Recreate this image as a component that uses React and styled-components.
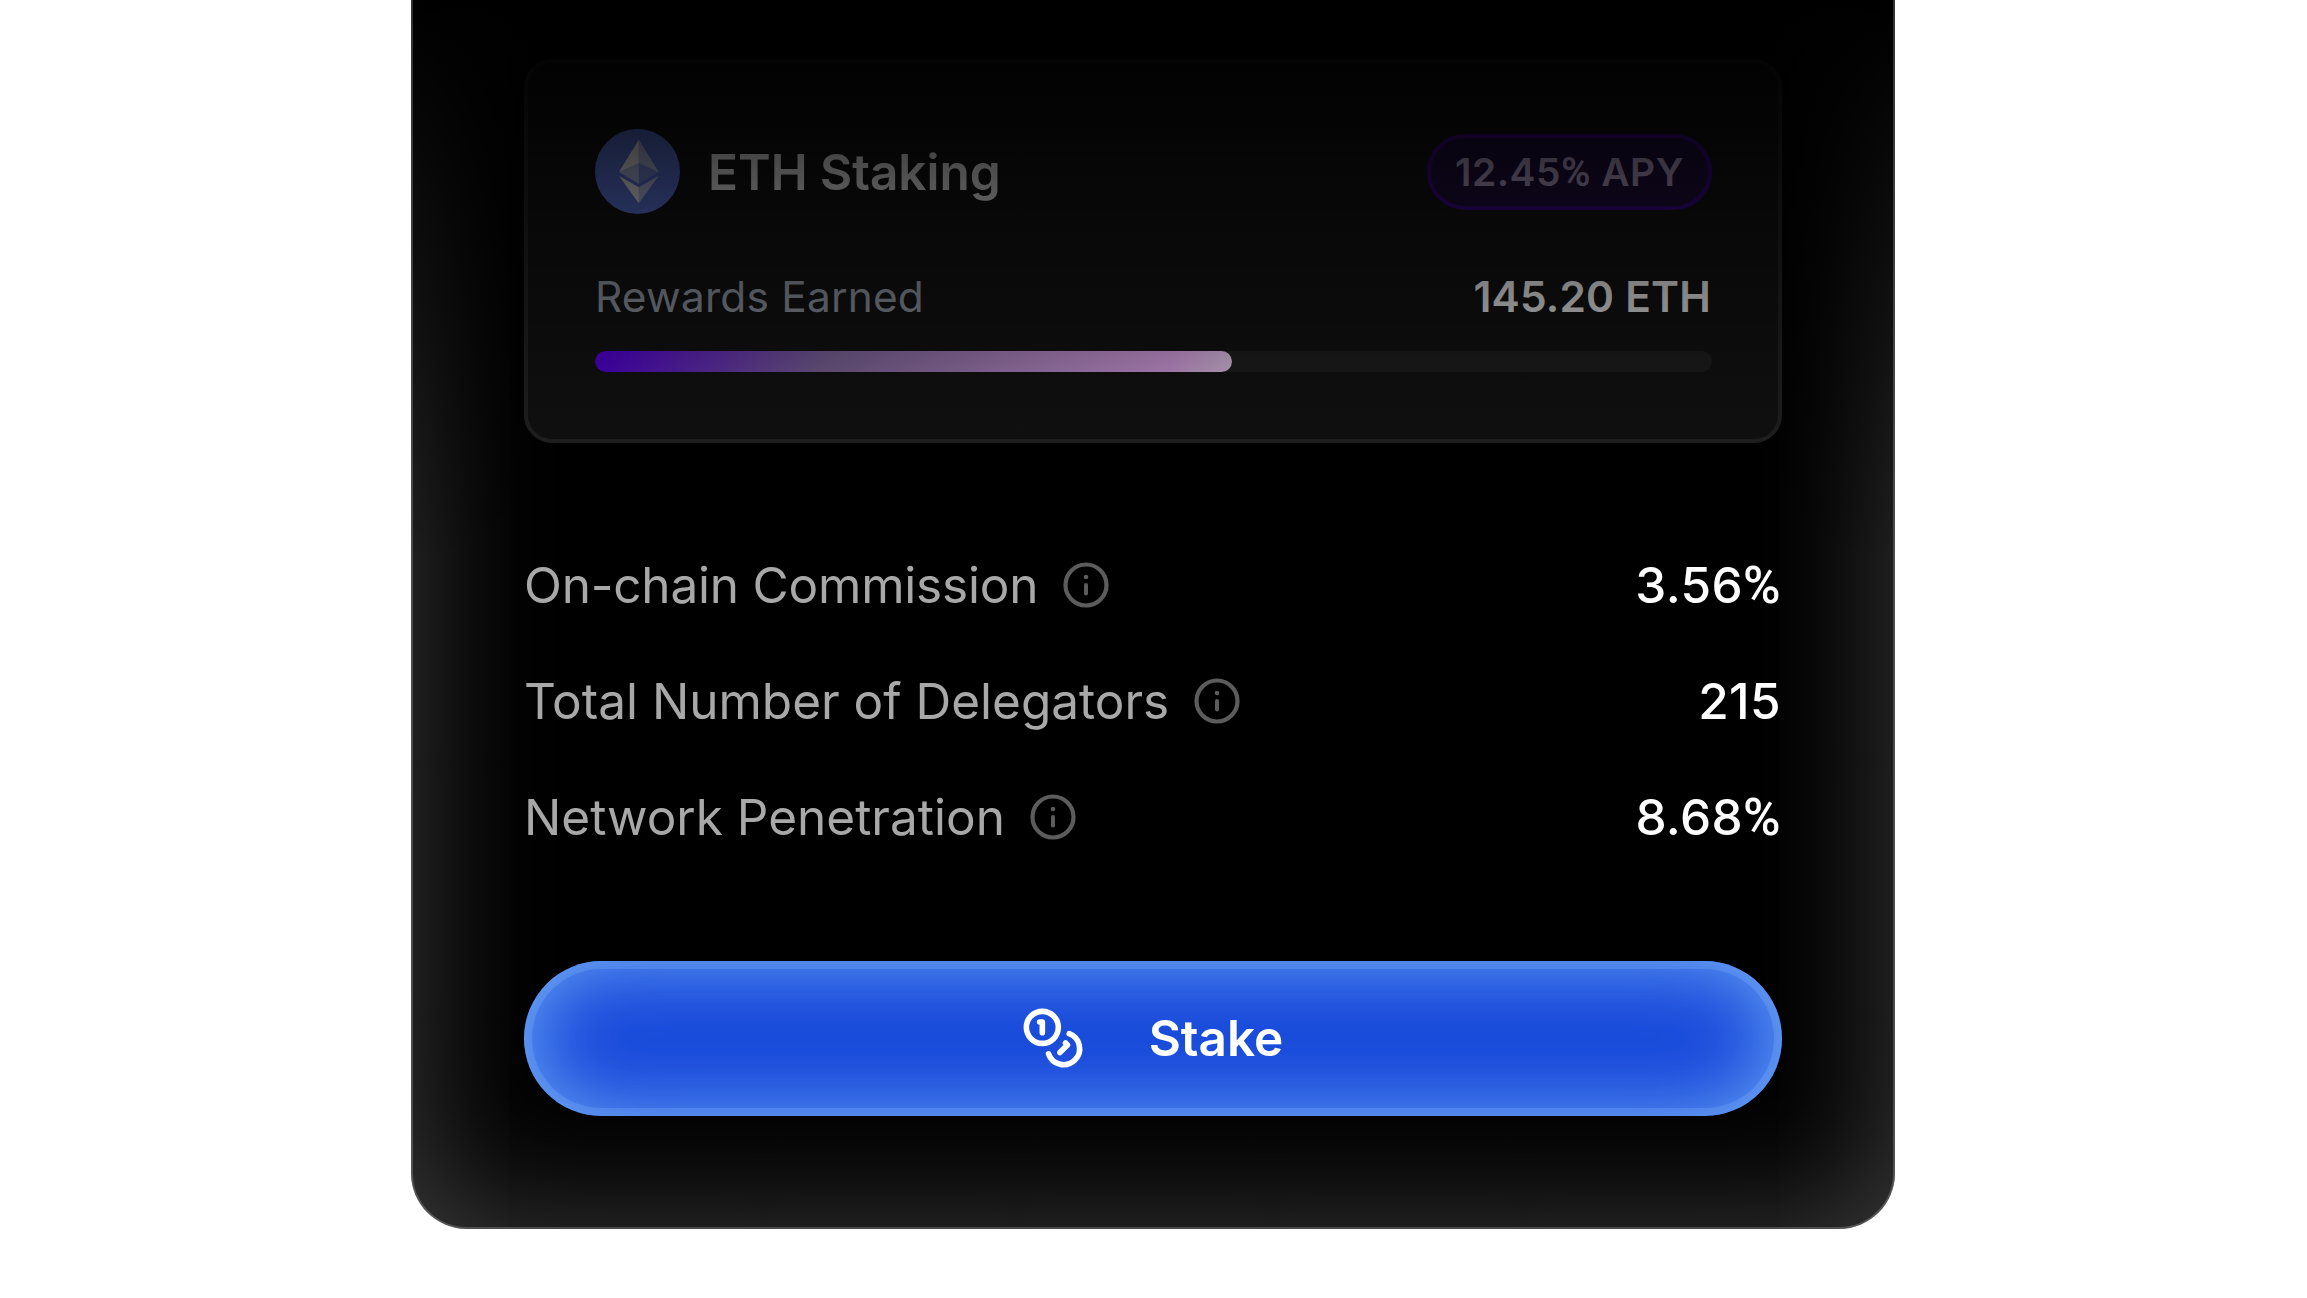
import React from 'react';
import styled, { createGlobalStyle } from 'styled-components';

const stats = [
  { label: 'On-chain Commission', value: '3.56', unit: '%', tracking: -0.2 },
  { label: 'Total Number of Delegators', value: '215' },
  { label: 'Network Penetration', value: '8.68', unit: '%' },
];

const EthIcon = () => (
  <svg width="85" height="85" viewBox="0 0 32 32" fill="#fff">
    <circle cx="16" cy="16" r="16" fill="#627eea" />
    <path fillOpacity=".602" d="M16.498 4v8.87l7.497 3.35z" />
    <path d="M16.498 4L9 16.22l7.498-3.35z" />
    <path fillOpacity=".602" d="M16.498 21.968v6.027L24 17.616z" />
    <path d="M16.498 27.995v-6.028L9 17.616z" />
    <path fillOpacity=".2" d="M16.498 20.573l7.497-4.353-7.497-3.348z" />
    <path fillOpacity=".602" d="M9 16.22l7.498 4.353v-7.701z" />
  </svg>
);

const InfoIcon = () => (
  <svg width="46" height="46" viewBox="0 0 46 46" fill="none" stroke="#5c5c5c" strokeLinecap="round">
    <circle cx="23" cy="23" r="20.5" strokeWidth="4.2" />
    <path strokeWidth="4" d="M23 23v8.4" />
    <circle cx="23" cy="15" r="2.3" fill="#5c5c5c" stroke="none" />
  </svg>
);

const CoinsIcon = () => (
  <svg
    width="64"
    height="64"
    viewBox="0 0 24 24"
    fill="none"
    stroke="currentColor"
    strokeWidth="2.1"
    strokeLinecap="round"
    strokeLinejoin="round"
  >
    <circle cx="8" cy="8" r="6" />
    <path d="M18.09 10.37A6 6 0 1 1 10.34 18" />
    <path d="M7 6h1v4" />
    <path d="m16.71 13.88.7.71-2.82 2.82" />
  </svg>
);

const App = () => {
  return (
    <>
      <GlobalStyle />
      <Page>
        <Modal>
          <StakingCard>
            <CardHeader>
              <Asset>
                <EthIcon />
                <AssetName>ETH Staking</AssetName>
              </Asset>
              <ApyBadge>
                <span>12.45<Unit>%</Unit> APY</span>
              </ApyBadge>
            </CardHeader>
            <RewardRow>
              <RewardLabel>Rewards Earned</RewardLabel>
              <RewardValue>145.20 ETH</RewardValue>
            </RewardRow>
            <ProgressTrack>
              <ProgressFill $percent={57} />
            </ProgressTrack>
          </StakingCard>

          <StatList>
            {stats.map((stat) => (
              <StatRow key={stat.label}>
                <StatLabel $tracking={stat.tracking}>
                  {stat.label}
                  <InfoIcon />
                </StatLabel>
                <StatValue>
                  {stat.value}
                  {stat.unit && <Unit>{stat.unit}</Unit>}
                </StatValue>
              </StatRow>
            ))}
          </StatList>

          <StakeButton>
            <CoinsIcon />
            Stake
          </StakeButton>
        </Modal>
      </Page>
    </>
  );
};

const GlobalStyle = createGlobalStyle`
  * {
    box-sizing: border-box;
  }

  body {
    margin: 0;
    background: #fff;
    font-family: 'Inter', sans-serif;
    overflow: hidden;
  }
`;

const Page = styled.div`
  width: 100%;
  height: 100vh;
  display: flex;
  justify-content: center;
  align-items: flex-end;
  padding: 0 1px 69px 0;
  overflow: hidden;
`;

const Modal = styled.div`
  position: relative;
  flex-shrink: 0;
  width: 1484px;
  height: 1500px;
  padding: 0 113px 113px;
  display: flex;
  flex-direction: column;
  justify-content: flex-end;
  background: #000;
  border-radius: 56px;
  box-shadow: inset 0 0 141px rgba(255, 255, 255, 0.26);

  /* fades the upper part of the modal into black */
  &::before {
    content: '';
    position: absolute;
    inset: 0 0 auto;
    height: 835px;
    background: linear-gradient(to bottom, #000 271px, transparent 835px);
  }

  &::after {
    content: '';
    position: absolute;
    inset: 0;
    border: 2px solid rgba(255, 255, 255, 0.2);
    border-radius: 56px;
    pointer-events: none;
  }
`;

const StakingCard = styled.div`
  height: 384px;
  padding: 66px 66px 0 67px;
  background: #141414;
  border: 4px solid #262626;
  border-radius: 28px;
`;

const CardHeader = styled.div`
  display: flex;
  align-items: center;
  justify-content: space-between;
`;

const Asset = styled.div`
  display: flex;
  align-items: center;
  gap: 28px;
`;

const AssetName = styled.span`
  font-size: 49.5px;
  font-weight: 600;
  line-height: 70px;
  color: #fff;
`;

const Unit = styled.span`
  font-family: 'Roboto', sans-serif;
  font-size: 1.03em;
  line-height: 1;
`;

const ApyBadge = styled.span`
  display: flex;
  align-items: center;
  justify-content: center;
  width: 285px;
  height: 76px;
  padding-bottom: 1px;
  font-size: 38.9px;
  font-weight: 600;
  letter-spacing: 0.5px;
  color: #c3afdd;
  background: #200e40;
  border: 4px solid #3e0794;
  border-radius: 38px;
`;

const RewardRow = styled.div`
  display: flex;
  align-items: center;
  justify-content: space-between;
  margin-top: 55px;
  font-size: 42.4px;
  line-height: 56px;
  letter-spacing: 0.2px;
`;

const RewardLabel = styled.span`
  color: #9ca3af;
`;

const RewardValue = styled.span`
  padding-right: 1px;
  font-weight: 600;
  color: #fff;
`;

const ProgressTrack = styled.div`
  height: 21px;
  margin-top: 26px;
  background: #222;
  border-radius: 11px;
  overflow: hidden;
`;

const ProgressFill = styled.div`
  width: ${(props) => props.$percent}%;
  height: 100%;
  background: linear-gradient(120deg, #5a00ea 2%, #876ca6 36%, #ecaff8 90%, #f8dcff 100%);
  border-radius: 11px;
`;

const StatList = styled.div`
  display: flex;
  flex-direction: column;
  gap: 46px;
  margin: 107px 0 109px;
`;

const StatRow = styled.div`
  display: flex;
  align-items: center;
  justify-content: space-between;
  height: 70px;
  font-size: 49.5px;
`;

const StatLabel = styled.span`
  display: flex;
  align-items: center;
  gap: 25px;
  letter-spacing: ${(props) => props.$tracking || 0}px;
  color: #a8a8a8;
`;

const StatValue = styled.span`
  padding-right: 1px;
  font-weight: 500;
  letter-spacing: 0.4px;
  color: #fff;
`;

const StakeButton = styled.button`
  display: flex;
  align-items: center;
  justify-content: center;
  gap: 64px;
  flex-shrink: 0;
  height: 155px;
  padding: 0 2px 2px 0;
  border: none;
  border-radius: 78px;
  background: #1748da;
  box-shadow:
    inset 0 0 0 8px rgba(147, 197, 253, 0.22),
    inset 0 0 84px #6eaaf6;
  font-family: inherit;
  font-size: 49.5px;
  font-weight: 600;
  color: #fff;
  cursor: pointer;
`;

export default App;
